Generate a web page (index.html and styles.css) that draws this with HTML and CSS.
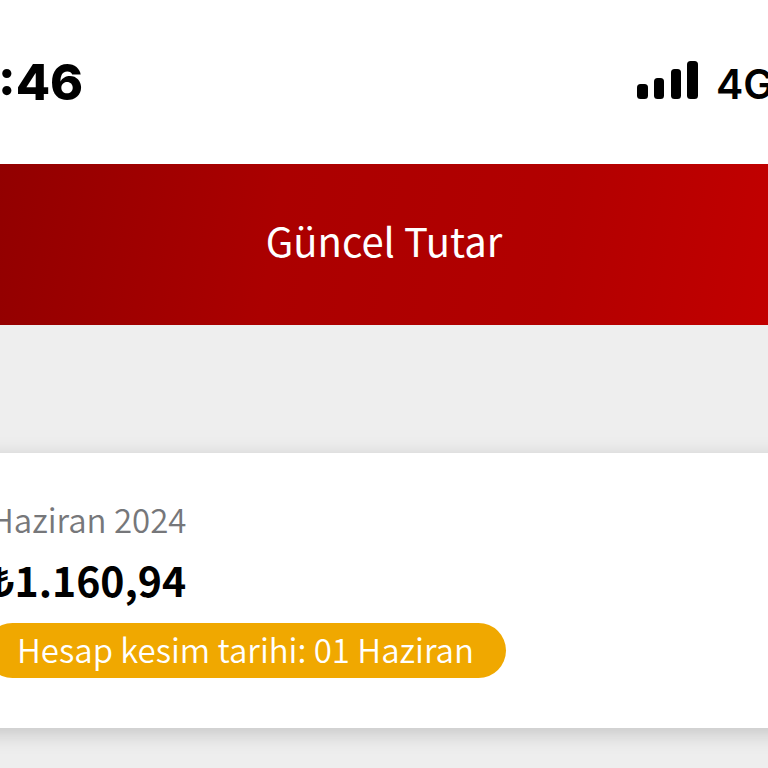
FILE: index.html
```html
<!DOCTYPE html>
<html lang="tr">
<head>
<meta charset="utf-8">
<meta name="viewport" content="width=device-width, initial-scale=1">
<title>Güncel Tutar</title>
<link rel="stylesheet" href="styles.css">
</head>
<body>
<div class="status">
  <time class="clock">:46</time>
  <div class="network">
    <svg class="signal" width="61" height="38" viewBox="0 0 61 38" aria-hidden="true">
      <rect x="0" y="23" width="11" height="15" rx="3.5"/>
      <rect x="17" y="17" width="10" height="21" rx="3.5"/>
      <rect x="34" y="8" width="10" height="30" rx="3.5"/>
      <rect x="50" y="0" width="11" height="38" rx="3.5"/>
    </svg>
    <span class="carrier">4G</span>
  </div>
</div>
<header class="titlebar"><h1>Güncel Tutar</h1></header>
<main>
  <section class="bill">
    <p class="period">Haziran 2024</p>
    <p class="amount">₺1.160,94</p>
    <p class="badge">Hesap kesim tarihi: 01 Haziran</p>
  </section>
</main>
</body>
</html>
```
FILE: styles.css
```css
* { box-sizing: border-box; }
body {
  margin: 0;
  min-height: 100vh;
  overflow-x: hidden;
  background: #eeeeee;
  color: #000;
  font-family: "Noto Sans CJK JP", "Noto Sans", sans-serif;
}
h1, p { margin: 0; }
.status {
  display: flex;
  justify-content: space-between;
  align-items: center;
  height: 164px;
  overflow: hidden;
  background: #fff;
  font-family: Inter, sans-serif;
}
.clock { font-size: 50px; font-weight: 800; line-height: 60px; margin-left: -2px; }
.network {
  display: flex;
  align-items: baseline;
  gap: 18px;
  margin-right: -6px;
  padding-top: 4px;
}
.signal { display: block; }
.carrier { font-size: 41px; font-weight: 600; line-height: 52px; }
.titlebar {
  padding: 44px 0 52px;
  background: linear-gradient(100deg, #920000 0%, #ab0000 36%, #b20000 72%, #c20000 100%);
  color: #fff;
  text-align: center;
}
.titlebar h1 { font-size: 40px; font-weight: 400; line-height: 65px; }
.bill {
  margin: 128px -24px 0;
  padding: 40px 24px 50px;
  background: #fff;
  box-shadow: 0 5px 20px rgba(0, 0, 0, .18);
}
.period { margin-left: -10px; color: #76777a; font-size: 33px; font-weight: 350; line-height: 52px; }
.amount { margin-left: -9px; font-size: 41px; font-weight: 700; line-height: 68px; }
.badge {
  width: max-content;
  margin: 10px 0 0 -15px;
  padding: 0 32px 2px;
  border-radius: 28px;
  background: #f0a800;
  color: #fff;
  font-size: 33px;
  font-weight: 350;
  line-height: 53px;
}
```
